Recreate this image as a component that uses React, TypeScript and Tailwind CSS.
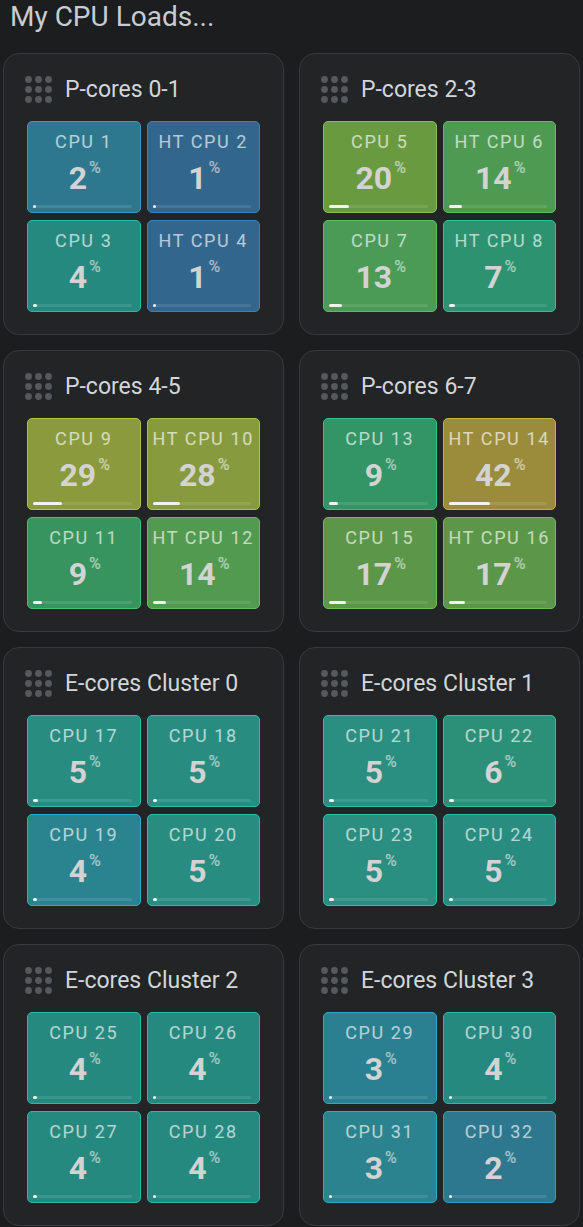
import React from 'react';

interface Core {
  label: string;
  load: number;
  color: string;
}

interface Group {
  title: string;
  cores: Core[];
}

const groups: Group[] = [
  {
    title: 'P-cores 0-1',
    cores: [
      { label: 'CPU 1', load: 2, color: '#2e788f' },
      { label: 'HT CPU 2', load: 1, color: '#32668c' },
      { label: 'CPU 3', load: 4, color: '#26897f' },
      { label: 'HT CPU 4', load: 1, color: '#32668c' },
    ],
  },
  {
    title: 'P-cores 2-3',
    cores: [
      { label: 'CPU 5', load: 20, color: '#6a9a40' },
      { label: 'HT CPU 6', load: 14, color: '#4e9a52' },
      { label: 'CPU 7', load: 13, color: '#4b9a56' },
      { label: 'HT CPU 8', load: 7, color: '#2d9270' },
    ],
  },
  {
    title: 'P-cores 4-5',
    cores: [
      { label: 'CPU 9', load: 29, color: '#8a9a3c' },
      { label: 'HT CPU 10', load: 28, color: '#879b3e' },
      { label: 'CPU 11', load: 9, color: '#38945f' },
      { label: 'HT CPU 12', load: 14, color: '#529a50' },
    ],
  },
  {
    title: 'P-cores 6-7',
    cores: [
      { label: 'CPU 13', load: 9, color: '#339466' },
      { label: 'HT CPU 14', load: 42, color: '#9a8c3a' },
      { label: 'CPU 15', load: 17, color: '#5c9648' },
      { label: 'HT CPU 16', load: 17, color: '#5c9648' },
    ],
  },
  {
    title: 'E-cores Cluster 0',
    cores: [
      { label: 'CPU 17', load: 5, color: '#288c80' },
      { label: 'CPU 18', load: 5, color: '#288c80' },
      { label: 'CPU 19', load: 4, color: '#2a8490' },
      { label: 'CPU 20', load: 5, color: '#288c80' },
    ],
  },
  {
    title: 'E-cores Cluster 1',
    cores: [
      { label: 'CPU 21', load: 5, color: '#2a8e80' },
      { label: 'CPU 22', load: 6, color: '#2c9078' },
      { label: 'CPU 23', load: 5, color: '#2a8e80' },
      { label: 'CPU 24', load: 5, color: '#288c80' },
    ],
  },
  {
    title: 'E-cores Cluster 2',
    cores: [
      { label: 'CPU 25', load: 4, color: '#26897f' },
      { label: 'CPU 26', load: 4, color: '#26897f' },
      { label: 'CPU 27', load: 4, color: '#26897f' },
      { label: 'CPU 28', load: 4, color: '#26897f' },
    ],
  },
  {
    title: 'E-cores Cluster 3',
    cores: [
      { label: 'CPU 29', load: 3, color: '#2a7f90' },
      { label: 'CPU 30', load: 4, color: '#26897f' },
      { label: 'CPU 31', load: 3, color: '#2a838e' },
      { label: 'CPU 32', load: 2, color: '#2e788f' },
    ],
  },
];

// border is the tile colour pushed a bit lighter and more saturated
function borderFor(hex: string) {
  const r = parseInt(hex.slice(1, 3), 16) / 255;
  const g = parseInt(hex.slice(3, 5), 16) / 255;
  const b = parseInt(hex.slice(5, 7), 16) / 255;
  const max = Math.max(r, g, b);
  const min = Math.min(r, g, b);
  const l = (max + min) / 2;
  const d = max - min;
  const s = d === 0 ? 0 : d / (1 - Math.abs(2 * l - 1));
  let h = 0;
  if (d !== 0) {
    if (max === r) h = ((g - b) / d) % 6;
    else if (max === g) h = (b - r) / d + 2;
    else h = (r - g) / d + 4;
  }
  h = Math.round(h * 60 + 360) % 360;
  return `hsl(${h} ${Math.min(100, s * 100 + 8)}% ${l * 100 + 10}%)`;
}

const DotsIcon: React.FC = () => (
  <svg width="27" height="27" viewBox="0 0 27 27" className="shrink-0">
    {[3.5, 13.5, 23.5].map((cy) =>
      [3.5, 13.5, 23.5].map((cx) => (
        <circle key={`${cx}-${cy}`} cx={cx} cy={cy} r="3.4" fill="#56595c" />
      ))
    )}
  </svg>
);

const CoreTile: React.FC<{ core: Core }> = ({ core }) => (
  <div
    className="relative h-[92px] rounded-[5px] border flex flex-col items-center"
    style={{ backgroundColor: core.color, borderColor: borderFor(core.color) }}
  >
    <div className="mt-[9px] text-[18px] leading-[22px] tracking-[1.6px] text-white/65 whitespace-nowrap">
      {core.label}
    </div>
    <div className="mt-[9px] flex items-start pl-[2px]">
      <span className="text-[32px] leading-[32px] font-bold text-[#d3d3d3]">{core.load}</span>
      <span className="ml-[2px] -mt-[2px] text-[16px] leading-[16px] font-medium text-white/55">%</span>
    </div>
    <div className="absolute left-[5px] right-[8px] bottom-[4px] h-[3px] rounded-full bg-white/10">
      <div
        className="h-full rounded-full bg-[#f2f2f2]"
        style={{ width: core.load < 3 ? '3px' : `${core.load}%` }}
      />
    </div>
  </div>
);

const GroupCard: React.FC<{ group: Group }> = ({ group }) => (
  <div className="h-[282px] rounded-[16px] border border-[#38393c] bg-[#222426] pt-[22px]">
    <div className="flex items-center gap-[13px] px-[21px] h-[27px]">
      <DotsIcon />
      <span className="text-[23px] leading-[27px] text-[#d2d6da] whitespace-nowrap">{group.title}</span>
    </div>
    <div className="mt-[18px] px-[23px] grid grid-cols-2 gap-x-[6px] gap-y-[7px]">
      {group.cores.map((c) => (
        <CoreTile key={c.label} core={c} />
      ))}
    </div>
  </div>
);

export default function App() {
  return (
    <div className="min-h-screen bg-[#1b1d1f] font-['Roboto','Liberation_Sans',sans-serif]">
      <div className="h-[53px] pl-[10px] text-[28px] leading-[33px] text-[#c8ccd0]">
        My CPU Loads...
      </div>
      <div className="grid grid-cols-2 gap-x-[15px] gap-y-[15px] px-[3px]">
        {groups.map((g) => (
          <GroupCard key={g.title} group={g} />
        ))}
      </div>
    </div>
  );
}
